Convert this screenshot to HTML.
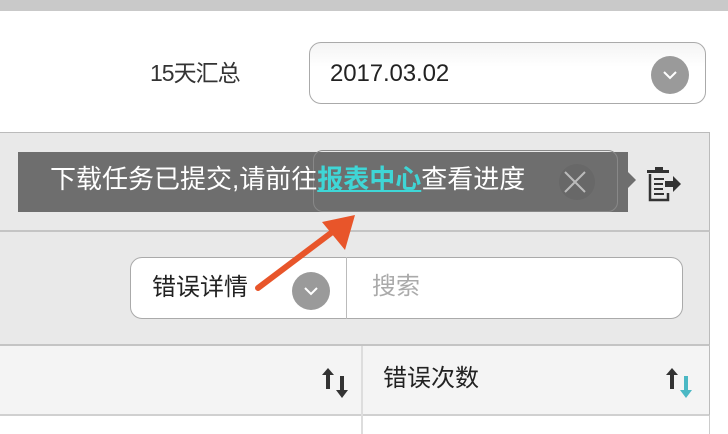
<!DOCTYPE html>
<html><head><meta charset="utf-8"><style>
*{margin:0;padding:0;box-sizing:border-box}
body{width:728px;height:434px;overflow:hidden;background:#fff;position:relative;font-family:"Liberation Sans","Noto Sans CJK SC",sans-serif;color:#333}
.a{position:absolute;line-height:1}
.circ{position:absolute;width:38px;height:38px;border-radius:50%;background:#9a9a9a}
.circ svg{position:absolute;left:11px;top:13px}
</style></head><body>
<div class="a" style="left:0;top:0;width:728px;height:11px;background:#c9c9c9"></div>
<div class="a" style="left:150px;top:62px;font-size:23px;letter-spacing:-1px">15天汇总</div>
<div class="a" style="left:309px;top:42px;width:397px;height:62px;border:1px solid #aaa;border-radius:12px;background:linear-gradient(#f4f4f4,#fff 40%)"></div>
<div class="a" style="left:330px;top:62px;font-size:24px;color:#222;letter-spacing:-0.1px">2017.03.02</div>
<div class="circ" style="left:651px;top:56px"><svg width="16" height="12"><path d="M2 3 L8 9 L14 3" stroke="#fff" stroke-width="2" fill="none"/></svg></div>

<div class="a" style="left:0;top:132px;width:710px;height:100px;background:#e9e9e9;border-top:1px solid #bbb;border-right:1px solid #bbb;border-bottom:2px solid #c4c4c4"></div>
<div class="a" style="left:0;top:232px;width:710px;height:114px;background:#e9e9e9;border-right:1px solid #bbb;border-bottom:2px solid #c4c4c4"></div>
<div class="a" style="left:0;top:346px;width:710px;height:70px;background:#f4f4f4;border-right:1px solid #bbb;border-bottom:2px solid #d0d0d0"></div>
<div class="a" style="left:361px;top:346px;width:2px;height:88px;background:#ddd"></div>
<div class="a" style="left:709px;top:416px;width:1px;height:18px;background:#ccc"></div>

<div class="a" style="left:18px;top:152px;width:610px;height:60px;background:#6e6e6e"></div>
<div class="a" style="left:313px;top:150px;width:305px;height:62px;border:1px solid #888;border-radius:10px"></div>
<div class="a" style="left:50px;top:166px;font-size:26px;color:#fff;white-space:nowrap">下载任务已提交,请前往<span style="color:#3fd6d6;text-decoration:underline;font-weight:bold">报表中心</span>查看进度</div>
<div class="a" style="left:559px;top:164px;width:36px;height:36px;border-radius:50%;background:#686868"></div>
<svg class="a" style="left:563px;top:170px" width="24" height="24"><path d="M2 2L22 22M22 2L2 22" stroke="#bbb" stroke-width="2"/></svg>
<svg class="a" style="left:628px;top:172px" width="10" height="16"><path d="M0 0L8 8L0 16Z" fill="#6e6e6e"/></svg>
<svg class="a" style="left:643px;top:160px" width="44" height="44" viewBox="0 0 44 44"><path d="M12 7h8v3h-8z M4 10h22v3H4z" fill="#333"/><path d="M7 14v26h18V33" stroke="#333" stroke-width="2.5" fill="none"/><path d="M11 19h10M11 24h9M11 29h9M11 34h10" stroke="#333" stroke-width="2"/><path d="M22 21h8v-5l8 8-8 8v-5h-8z" fill="#333"/></svg>

<div class="a" style="left:130px;top:257px;width:553px;height:62px;border:1px solid #aaa;border-radius:12px;background:#fff"></div>
<div class="a" style="left:346px;top:257px;width:1px;height:62px;background:#bbb"></div>
<div class="a" style="left:152px;top:276px;font-size:24px;color:#222">错误详情</div>
<div class="circ" style="left:292px;top:272px"><svg width="16" height="12"><path d="M2 3 L8 9 L14 3" stroke="#fff" stroke-width="2" fill="none"/></svg></div>
<div class="a" style="left:372px;top:275px;font-size:24px;color:#aaa">搜索</div>
<svg class="a" style="left:0;top:0" width="728" height="434"><path d="M258 288L335 230" stroke="#e8552a" stroke-width="6" stroke-linecap="round"/><path d="M355 215L322 222L345 250Z" fill="#e8552a"/></svg>

<div class="a" style="left:383px;top:367px;font-size:24px;color:#222">错误次数</div>
<svg class="a" style="left:320px;top:366px" width="36" height="36"><path d="M8 2L2 9h4v14h4V9h4Z" fill="#333"/><path d="M20 10h4v14h4l-6 8-6-8h4Z" fill="#333"/></svg>
<svg class="a" style="left:664px;top:366px" width="36" height="36"><path d="M8 2L2 9h4v14h4V9h4Z" fill="#333"/><path d="M20 10h4v14h4l-6 8-6-8h4Z" fill="#4bb8c4"/></svg>
</body></html>
